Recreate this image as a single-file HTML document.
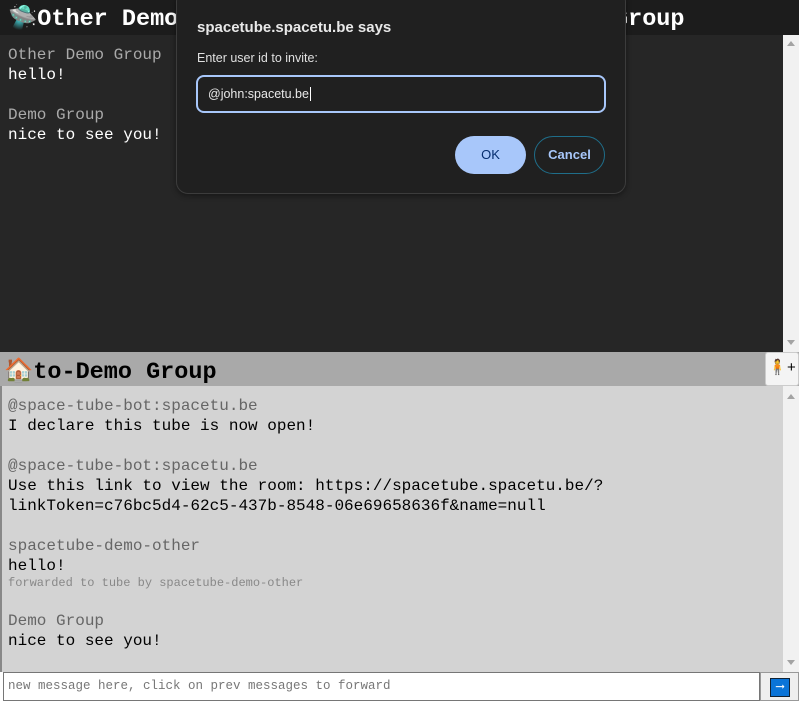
<!DOCTYPE html>
<html><head><meta charset="utf-8"><style>
*{margin:0;padding:0;box-sizing:border-box}
body{width:799px;height:701px;overflow:hidden;background:#fff;position:relative;font-family:"Liberation Mono",monospace}
.abs{position:absolute}
.t{font-size:16px;line-height:20px;white-space:pre}
.title{font-weight:bold;font-size:23.5px;line-height:35px;white-space:pre}
.sb{background:#f1f1f1}
.dlg{font-family:"Segoe UI","Liberation Sans",sans-serif}
</style></head><body>
<div class="abs" style="left:0;top:0;width:799px;height:35px;background:#1c1c1c"></div>
<div class="abs title" style="left:8px;top:2px;color:#fff">🛸Other Demo Group</div>
<div class="abs title" style="left:614px;top:2px;color:#fff">Group</div>
<div class="abs" style="left:0;top:35px;width:783px;height:317px;background:#262626"></div>
<div class="abs sb" style="left:783px;top:35px;width:16px;height:317px"></div>
<div class="abs" style="left:787px;top:41px;border:4px solid transparent;border-bottom:5px solid #a3a3a3;border-top:0"></div>
<div class="abs" style="left:787px;top:340px;border:4px solid transparent;border-top:5px solid #a3a3a3;border-bottom:0"></div>
<div class="abs t" style="left:8px;top:45px;color:#aaa">Other Demo Group</div>
<div class="abs t" style="left:8px;top:65px;color:#fff">hello!</div>
<div class="abs t" style="left:8px;top:105px;color:#aaa">Demo Group</div>
<div class="abs t" style="left:8px;top:125px;color:#fff">nice to see you!</div>
<div class="abs" style="left:0;top:352px;width:799px;height:34px;background:#a9a9a9"></div>
<div class="abs title" style="left:4px;top:355px;color:#000">🏠to-Demo Group</div>
<div class="abs" style="left:765px;top:352px;width:34px;height:34px;background:#f4f4f4;border:1px solid #ccc;border-radius:3px;font-size:15px;text-align:center;line-height:32px">🧍+</div>
<div class="abs" style="left:0;top:386px;width:783px;height:286px;background:#d3d3d3;border-left:2px solid #888"></div>
<div class="abs sb" style="left:783px;top:386px;width:16px;height:286px"></div>
<div class="abs" style="left:787px;top:394px;border:4px solid transparent;border-bottom:5px solid #a3a3a3;border-top:0"></div>
<div class="abs" style="left:787px;top:660px;border:4px solid transparent;border-top:5px solid #a3a3a3;border-bottom:0"></div>
<div class="abs t" style="left:8px;top:396px;color:#666">@space-tube-bot:spacetu.be</div>
<div class="abs t" style="left:8px;top:416px;color:#000">I declare this tube is now open!</div>
<div class="abs t" style="left:8px;top:456px;color:#666">@space-tube-bot:spacetu.be</div>
<div class="abs t" style="left:8px;top:476px;color:#000">Use this link to view the room: https://spacetube.spacetu.be/?</div>
<div class="abs t" style="left:8px;top:496px;color:#000">linkToken=c76bc5d4-62c5-437b-8548-06e69658636f&amp;name=null</div>
<div class="abs t" style="left:8px;top:536px;color:#666">spacetube-demo-other</div>
<div class="abs t" style="left:8px;top:556px;color:#000">hello!</div>
<div class="abs" style="left:8px;top:576px;font-size:12px;line-height:15px;color:#888;white-space:pre">forwarded to tube by spacetube-demo-other</div>
<div class="abs t" style="left:8px;top:611px;color:#666">Demo Group</div>
<div class="abs t" style="left:8px;top:631px;color:#000">nice to see you!</div>
<div class="abs" style="left:3px;top:672px;width:757px;height:29px;background:#fff;border:1px solid #767676;font-size:12.5px;line-height:27px;color:#777;padding-left:4px;white-space:pre">new message here, click on prev messages to forward</div>
<div class="abs" style="left:760px;top:672px;width:39px;height:29px;background:#efefef;border:1px solid #999"></div>
<div class="abs" style="left:770px;top:678px;width:20px;height:19px;background:#0a74d8;border:1px solid #123;color:#fff;font-size:12px;line-height:16px;text-align:center">⟶</div>
<div class="abs dlg" style="left:176px;top:-10px;width:450px;height:204px;background:#202020;border:1px solid #3c3c3c;border-radius:12px;box-shadow:0 2px 6px rgba(0,0,0,.4)"></div>
<div class="abs dlg" style="left:197px;top:19px;font-size:15px;font-weight:bold;color:#e8e8e8">spacetube.spacetu.be says</div>
<div class="abs dlg" style="left:197px;top:51px;font-size:12.5px;color:#e0e0e0">Enter user id to invite:</div>
<div class="abs dlg" style="left:196px;top:75px;width:410px;height:38px;border:2px solid #a8c7fa;border-radius:8px;background:#202020;font-size:12.5px;color:#e8e8e8;line-height:34px;padding-left:10px">@john:spacetu.be<span style="border-left:1px solid #fff;margin-left:1px"></span></div>
<div class="abs dlg" style="left:455px;top:136px;width:71px;height:38px;border-radius:19px;background:#a8c7fa;color:#062e6f;font-size:13px;text-align:center;line-height:38px">OK</div>
<div class="abs dlg" style="left:534px;top:136px;width:71px;height:38px;border-radius:19px;border:1px solid #1f6e8a;color:#a8c7fa;font-size:13px;font-weight:bold;text-align:center;line-height:36px">Cancel</div>
</body></html>
